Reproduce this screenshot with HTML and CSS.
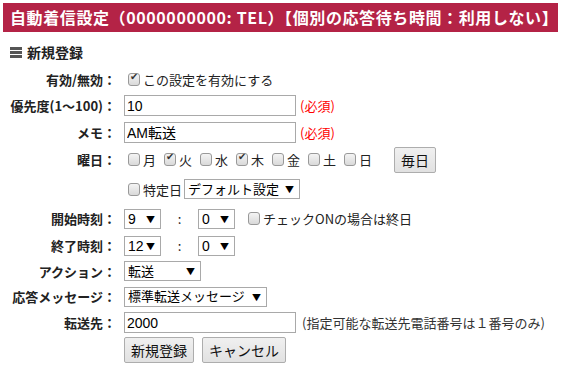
FILE: index.html
```html
<html>
<head>
<title>自動着信設定</title>
<link rel="stylesheet" href="styles.css">
</head>
<body>

<div class="title">自動着信設定（0000000000: TEL）【個別の応答待ち時間：利用しない】</div>

<h2 class="section"><span class="bars"><i></i><i></i><i></i></span>新規登録</h2>

<div class="form">
  <div class="label">有効/無効：</div>
  <div class="field"><label class="check"><input type="checkbox" checked>この設定を有効にする</label></div>

  <div class="label">優先度(1〜100)：</div>
  <div class="field"><input class="text" type="text" value="10"><span class="req">(必須)</span></div>

  <div class="label">メモ：</div>
  <div class="field"><input class="text" type="text" value="AM転送"><span class="req">(必須)</span></div>

  <div class="label">曜日：</div>
  <div class="field">
    <label class="check day"><input type="checkbox">月</label>
    <label class="check day"><input type="checkbox" checked>火</label>
    <label class="check day"><input type="checkbox">水</label>
    <label class="check day"><input type="checkbox" checked>木</label>
    <label class="check day"><input type="checkbox">金</label>
    <label class="check day"><input type="checkbox">土</label>
    <label class="check day"><input type="checkbox">日</label>
    <button class="btn btn-every">毎日</button>
  </div>

  <div class="label"></div>
  <div class="field">
    <label class="check tight"><input type="checkbox">特定日</label>
    <span class="sel"><select class="sel-day"><option>デフォルト設定</option></select></span>
  </div>

  <div class="label">開始時刻：</div>
  <div class="field">
    <span class="sel"><select class="sel-time"><option>9</option></select></span>
    <span class="colon">:</span>
    <span class="sel"><select class="sel-time"><option>0</option></select></span>
    <label class="check allday"><input type="checkbox">チェックONの場合は終日</label>
  </div>

  <div class="label">終了時刻：</div>
  <div class="field">
    <span class="sel"><select class="sel-time"><option>12</option></select></span>
    <span class="colon">:</span>
    <span class="sel"><select class="sel-time"><option>0</option></select></span>
  </div>

  <div class="label">アクション：</div>
  <div class="field"><span class="sel"><select class="sel-action"><option>転送</option></select></span></div>

  <div class="label">応答メッセージ：</div>
  <div class="field"><span class="sel"><select class="sel-msg"><option>標準転送メッセージ</option></select></span></div>

  <div class="label">転送先：</div>
  <div class="field"><input class="text" type="text" value="2000"><span class="note">(指定可能な転送先電話番号は１番号のみ)</span></div>

  <div class="label"></div>
  <div class="field">
    <button class="btn">新規登録</button>
    <button class="btn">キャンセル</button>
  </div>
</div>

</body>
</html>
```

FILE: styles.css
```css
body {
  margin: 3px;
  font-family: "Noto Sans CJK JP", sans-serif;
  font-size: 13px;
  color: #222;
}
div.title {
  margin-right: 5px;
  height: 29px;
  line-height: 29px;
  padding-left: 7px;
  background-color: #b42346;
  color: #fff;
  font-weight: bold;
  font-size: 16px;
  letter-spacing: 0.6px;
  white-space: nowrap;
  overflow: hidden;
}
h2.section {
  display: flex;
  align-items: center;
  margin: 10px 0 0 7px;
  height: 20px;
  font-size: 14px;
  font-weight: bold;
  color: #222;
}
span.bars {
  display: flex;
  flex-direction: column;
  gap: 1px;
  width: 12px;
  margin-right: 5px;
}
span.bars i {
  display: block;
  height: 3px;
  background-color: #555;
}
div.form {
  display: grid;
  grid-template-columns: 113px 1fr;
  grid-template-rows: 26px 27px 26px 29px 30px 29px 25px 26px 25px 27px 28px;
  column-gap: 8px;
  margin-top: 4px;
  align-items: center;
}
div.label {
  text-align: right;
  font-weight: bold;
  white-space: nowrap;
}
div.field {
  display: flex;
  align-items: center;
  white-space: nowrap;
}
label.check {
  display: inline-flex;
  align-items: center;
}
label.check.day {
  margin-right: 4px;
}
label.check.tight {
  margin-right: 2px;
}
label.check.allday {
  margin-left: 9px;
}
input[type=checkbox] {
  appearance: none;
  position: relative;
  width: 12px;
  height: 13px;
  margin: 0 3px 0 4px;
  border: 1px solid #999;
  border-radius: 3px;
  background: linear-gradient(#f4f4f4, #d9d9d9);
  box-sizing: border-box;
}
input[type=checkbox]:checked::after {
  content: "✔";
  position: absolute;
  left: 1px;
  top: -3px;
  font-size: 10px;
  color: #333;
}
input.text {
  width: 172px;
  height: 21px;
  margin: 0;
  padding: 0 2px;
  border: 1px solid #a9a9a9;
  box-sizing: border-box;
  font-family: "Liberation Sans", "Noto Sans CJK JP", sans-serif;
  font-size: 14px;
  color: #000;
}
span.req {
  margin-left: 4px;
  color: #f00;
}
span.note {
  margin-left: 6px;
  color: #333;
}
span.sel {
  position: relative;
  display: inline-block;
}
span.sel::after {
  content: "▼";
  position: absolute;
  right: 6px;
  top: 4px;
  font-size: 9px;
  color: #000;
  pointer-events: none;
}
select {
  appearance: none;
  height: 20px;
  margin: 0;
  padding: 0 14px 0 3px;
  border: 1px solid #a9a9a9;
  background-color: #fff;
  box-sizing: border-box;
  font-family: "Liberation Sans", "Noto Sans CJK JP", sans-serif;
  font-size: 14px;
  color: #000;
}
select.sel-time {
  width: 37px;
}
select.sel-day {
  width: 116px;
  font-size: 13px;
}
select.sel-action {
  width: 77px;
  font-size: 13px;
}
select.sel-msg {
  width: 143px;
  font-size: 13px;
}
span.colon {
  width: 37px;
  text-align: center;
}
button.btn {
  height: 26px;
  margin: 0 8px 0 0;
  padding: 0 6px;
  border: 1px solid #adadad;
  border-radius: 2px;
  background: linear-gradient(#f0f0f0, #e1e1e1);
  font-family: "Noto Sans CJK JP", sans-serif;
  font-size: 14px;
  color: #111;
}
button.btn-every {
  margin-left: 18px;
}
```
